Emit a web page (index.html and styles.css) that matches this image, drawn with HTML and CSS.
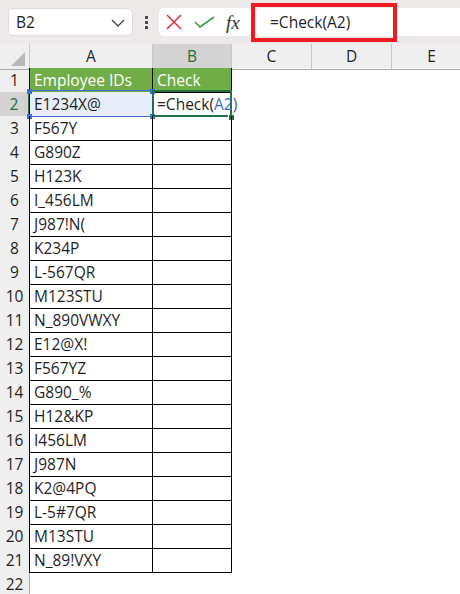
FILE: index.html
```html
<!DOCTYPE html>
<html>
<head>
<meta charset="utf-8">
<link rel="stylesheet" href="styles.css">
</head>
<body>
<div class="app">
  <div class="toolbar">
    <div class="namebox">
      <span class="name">B2</span>
      <svg class="chev" width="14" height="8" viewBox="0 0 14 8"><path d="M1 1 L7 7 L13 1" fill="none" stroke="#444" stroke-width="1.3"/></svg>
    </div>
    <div class="dots"><i></i><i></i><i></i></div>
    <div class="fbuttons">
      <svg width="16" height="16" viewBox="0 0 16 16"><path d="M1 1 L15 15 M15 1 L1 15" stroke="#e0343c" stroke-width="1.6" fill="none"/></svg>
      <svg width="21" height="12" viewBox="0 0 21 12"><path d="M1 6 L6 11 L20 1" stroke="#3a9a45" stroke-width="1.6" fill="none"/></svg>
      <span class="fx">fx</span>
    </div>
    <div class="finput"><span class="ftext">=Check(A2)</span></div>
    <div class="highlight"></div>
  </div>
  <div class="sheet">
    <div class="row hdr">
      <div class="corner"><span class="tri"></span></div>
      <div class="ch">A</div>
      <div class="ch sel">B</div>
      <div class="ch">C</div>
      <div class="ch">D</div>
      <div class="ch">E</div>
    </div>
    <div class="row"><div class="rh">1</div><div class="c a head">Employee IDs</div><div class="c b head">Check</div></div>
    <div class="row"><div class="rh sel">2</div><div class="c a ref">E1234X@<span class="refbox"><i class="h tl"></i><i class="h tr"></i><i class="h bl"></i><i class="h br"></i></span></div><div class="c b act"><span class="actbox"></span><span class="fill"></span><span class="edit">=Check(<span class="blue">A2</span><span class="paren">)</span></span></div></div>
    <div class="row"><div class="rh">3</div><div class="c a">F567Y</div><div class="c b"></div></div>
    <div class="row"><div class="rh">4</div><div class="c a">G890Z</div><div class="c b"></div></div>
    <div class="row"><div class="rh">5</div><div class="c a">H123K</div><div class="c b"></div></div>
    <div class="row"><div class="rh">6</div><div class="c a">I_456LM</div><div class="c b"></div></div>
    <div class="row"><div class="rh">7</div><div class="c a">J987!N(</div><div class="c b"></div></div>
    <div class="row"><div class="rh">8</div><div class="c a">K234P</div><div class="c b"></div></div>
    <div class="row"><div class="rh">9</div><div class="c a">L-567QR</div><div class="c b"></div></div>
    <div class="row"><div class="rh">10</div><div class="c a">M123STU</div><div class="c b"></div></div>
    <div class="row"><div class="rh">11</div><div class="c a">N_890VWXY</div><div class="c b"></div></div>
    <div class="row"><div class="rh">12</div><div class="c a">E12@X!</div><div class="c b"></div></div>
    <div class="row"><div class="rh">13</div><div class="c a">F567YZ</div><div class="c b"></div></div>
    <div class="row"><div class="rh">14</div><div class="c a">G890_%</div><div class="c b"></div></div>
    <div class="row"><div class="rh">15</div><div class="c a">H12&amp;KP</div><div class="c b"></div></div>
    <div class="row"><div class="rh">16</div><div class="c a">I456LM</div><div class="c b"></div></div>
    <div class="row"><div class="rh">17</div><div class="c a">J987N</div><div class="c b"></div></div>
    <div class="row"><div class="rh">18</div><div class="c a">K2@4PQ</div><div class="c b"></div></div>
    <div class="row"><div class="rh">19</div><div class="c a">L-5#7QR</div><div class="c b"></div></div>
    <div class="row"><div class="rh">20</div><div class="c a">M13STU</div><div class="c b"></div></div>
    <div class="row"><div class="rh">21</div><div class="c a">N_89!VXY</div><div class="c b"></div></div>
    <div class="row"><div class="rh">22</div></div>
  </div>
</div>
</body>
</html>
```

FILE: styles.css
```css
* { box-sizing: border-box; }
html, body { margin: 0; padding: 0; background: #fff; }
body { font-family: "Open Sans", "Noto Sans", sans-serif; color: #1f1f1f; overflow: hidden; }
.app { width: 460px; height: 594px; overflow: hidden; }

.toolbar {
  position: relative;
  height: 44px;
  background: #ede9e9;
  display: flex;
  align-items: center;
  padding: 0 0 0 8px;
}
.namebox {
  width: 125px; height: 28px;
  background: #fff;
  border: 1px solid #dcdcdc;
  border-radius: 5px;
  display: flex; align-items: center; justify-content: space-between;
  padding: 0 7px 0 7px;
}
.name { font-size: 15.5px; color: #1f1f1f; }
.chev { margin-top: 1px; }
.dots {
  width: 26px; height: 28px;
  display: flex; flex-direction: column; align-items: center; justify-content: center; gap: 2px;
}
.dots i { display: block; width: 3px; height: 3px; background: #4a4a4a; }
.fbuttons {
  width: 92px; height: 28px;
  background: #fff;
  border-radius: 5px;
  display: flex; align-items: center;
  padding-left: 7px; gap: 12px;
}
.fx { font-family: "Liberation Serif", serif; font-style: italic; font-size: 19px; color: #333; margin-left: -1px; line-height: 1; }
.finput {
  flex: 1; height: 28px; margin-left: 5px;
  background: #fff;
  border-radius: 5px 0 0 5px;
  display: flex; align-items: center;
  padding-left: 14px;
}
.ftext { font-size: 15.5px; color: #1f1f1f; }
.highlight {
  position: absolute;
  left: 251px; top: 3px;
  width: 146px; height: 39px;
  border: 4px solid #ed1c24;
}

.sheet { background: #fff; }
.row {
  display: grid;
  grid-template-columns: 30px 123px 79px 80px 80px 80px;
  height: 24px;
}
.hdr { background: #efefef; }
.corner {
  border-right: 1px solid #c8c8c8;
  border-bottom: 1px solid #a9a9a9;
  position: relative;
}
.tri {
  position: absolute; right: 4px; bottom: 3px;
  width: 0; height: 0;
  border-left: 14px solid transparent;
  border-bottom: 14px solid #b9b9b9;
}
.ch {
  border-right: 1px solid #c8c8c8;
  border-bottom: 1px solid #a9a9a9;
  text-align: center;
  font-size: 15.5px; line-height: 24px; color: #1f1f1f;
}
.ch.sel { background: #d3d3d3; color: #1e6e42; border-bottom: 2px solid #217346; }

.rh {
  background: #efefef;
  border-right: 1px solid #a9a9a9;
  border-bottom: 1px solid #d6d6d6;
  text-align: center;
  font-size: 15.5px; line-height: 24px; color: #1f1f1f;
}
.rh.sel { background: #d3d3d3; color: #1e6e42; border-right: 2px solid #217346; }

.c {
  position: relative;
  font-size: 15.5px; line-height: 24px;
  padding-left: 4px;
  white-space: nowrap;
  border-right: 1px solid #000;
  border-bottom: 1px solid #000;
}
.c.a { border-left: 1px solid #000; margin-left: -1px; width: 124px; }
.c.head { background: #70ad47; color: #fff; }

.c.ref { background: #e8eef9; }
.refbox {
  position: absolute; left: -1px; top: -2px; right: -1px; bottom: -1px;
  border: 1px solid #3b6fd1; border-left: 0;
}
.h { position: absolute; width: 5px; height: 5px; background: #3b6fd1; }
.h.tl { left: -2px; top: -2px; }
.h.tr { right: -3px; top: -2px; }
.h.bl { left: -2px; bottom: -3px; }
.h.br { right: -3px; bottom: -3px; }

.c.act { overflow: visible; }
.edit { position: relative; }
.blue { color: #3b6fd1; }
.paren { color: #2f5ba8; }
.actbox {
  position: absolute; left: -1px; top: -2px; right: -1px; bottom: -1px;
  border: 2px solid #217346;
}
.fill {
  position: absolute; right: -3px; bottom: -4px;
  width: 6px; height: 5px; background: #217346;
  border-left: 1px solid #fff;
}
```
